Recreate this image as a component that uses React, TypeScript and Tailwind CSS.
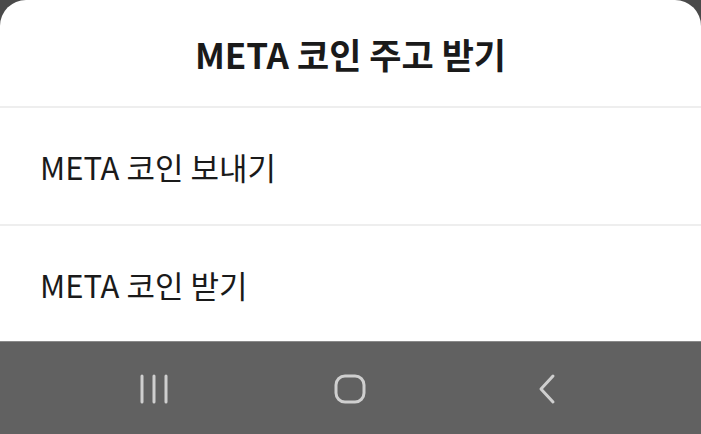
export default function App() {
  const font = { fontFamily: '"Noto Sans CJK KR", "Noto Sans", sans-serif' }
  return (
    <div className="w-[701px] h-[434px] bg-[#4a4a4a] flex flex-col overflow-hidden" style={font}>
      <div className="bg-white rounded-t-[26px] flex flex-col">
        <div className="h-[108px] flex items-center justify-center border-b-2 border-[#eeeeee]">
          <h1 className="text-[35px] font-bold text-[#1a1a1a] leading-none">
            META 코인 주고 받기
          </h1>
        </div>
        <div className="h-[118px] flex items-center px-[40px] pt-[1px] border-b-2 border-[#eeeeee]">
          <span className="text-[31px] text-[#1a1a1a] leading-none">META 코인 보내기</span>
        </div>
        <div className="h-[115px] flex items-center px-[40px] pt-[1px]">
          <span className="text-[31px] text-[#1a1a1a] leading-none">META 코인 받기</span>
        </div>
      </div>
      <nav className="flex-1 bg-[#616161] border-t border-[#8a8a8a] flex items-center pt-[2px]">
        <div className="w-[308px] flex justify-center">
          <svg width="30" height="32" viewBox="0 0 30 32">
            <g stroke="#cfcfcf" strokeWidth="3" strokeLinecap="round">
              <line x1="3" y1="3" x2="3" y2="29" />
              <line x1="15" y1="3" x2="15" y2="29" />
              <line x1="27" y1="3" x2="27" y2="29" />
            </g>
          </svg>
        </div>
        <div className="w-[84px] flex justify-center">
          <svg width="32" height="30" viewBox="0 0 32 30">
            <rect x="2" y="2" width="28" height="26" rx="9" fill="none" stroke="#cfcfcf" strokeWidth="3" />
          </svg>
        </div>
        <div className="flex-1 flex justify-center">
          <svg width="20" height="32" viewBox="0 0 20 32">
            <polyline points="16,3 4,16 16,29" fill="none" stroke="#cfcfcf" strokeWidth="3" strokeLinecap="round" strokeLinejoin="round" />
          </svg>
        </div>
      </nav>
    </div>
  )
}
